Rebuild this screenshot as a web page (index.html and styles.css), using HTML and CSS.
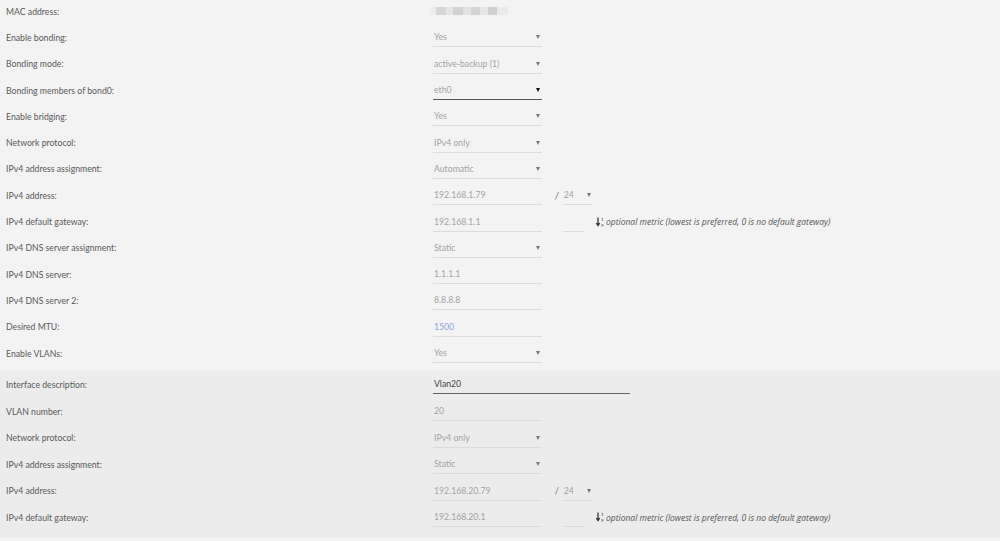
FILE: index.html
```html
<!DOCTYPE html>
<html lang="en">
<head>
    <meta charset="UTF-8">
    <title>Interface</title>
    <link rel="stylesheet" href="styles.css">
</head>
<body>
    <section class="group">
        <div class="row"><span class="label">MAC address:</span><span class="mac"></span></div>
        <div class="row"><span class="label">Enable bonding:</span><div class="field select">Yes<i></i></div></div>
        <div class="row"><span class="label">Bonding mode:</span><div class="field select">active-backup (1)<i></i></div></div>
        <div class="row"><span class="label">Bonding members of bond0:</span><div class="field select focus">eth0<i></i></div></div>
        <div class="row"><span class="label">Enable bridging:</span><div class="field select">Yes<i></i></div></div>
        <div class="row"><span class="label">Network protocol:</span><div class="field select">IPv4 only<i></i></div></div>
        <div class="row"><span class="label">IPv4 address assignment:</span><div class="field select">Automatic<i></i></div></div>
        <div class="row"><span class="label">IPv4 address:</span><div class="field">192.168.1.79</div><span class="slash">/</span><div class="field select prefix">24<i></i></div></div>
        <div class="row"><span class="label">IPv4 default gateway:</span><div class="field">192.168.1.1</div><div class="field metric"></div>
            <span class="hint">
                <svg class="sort" width="9" height="10" viewBox="0 0 9 10"><path d="M2 0.5v7.5M0.3 6l1.7 2.6 1.7-2.6" fill="none" stroke="#333" stroke-width="1.3"/><text x="5" y="4" font-size="4.5" fill="#333">1</text><text x="5" y="9.5" font-size="4.5" fill="#333">9</text></svg>
                <em>optional metric (lowest is preferred, 0 is no default gateway)</em>
            </span>
        </div>
        <div class="row"><span class="label">IPv4 DNS server assignment:</span><div class="field select">Static<i></i></div></div>
        <div class="row"><span class="label">IPv4 DNS server:</span><div class="field">1.1.1.1</div></div>
        <div class="row"><span class="label">IPv4 DNS server 2:</span><div class="field">8.8.8.8</div></div>
        <div class="row"><span class="label">Desired MTU:</span><div class="field mtu">1500</div></div>
        <div class="row"><span class="label">Enable VLANs:</span><div class="field select">Yes<i></i></div></div>
    </section>
    <section class="group vlan">
        <div class="row"><span class="label">Interface description:</span><div class="field wide">Vlan20</div></div>
        <div class="row"><span class="label">VLAN number:</span><div class="field">20</div></div>
        <div class="row"><span class="label">Network protocol:</span><div class="field select">IPv4 only<i></i></div></div>
        <div class="row"><span class="label">IPv4 address assignment:</span><div class="field select">Static<i></i></div></div>
        <div class="row"><span class="label">IPv4 address:</span><div class="field">192.168.20.79</div><span class="slash">/</span><div class="field select prefix">24<i></i></div></div>
        <div class="row"><span class="label">IPv4 default gateway:</span><div class="field">192.168.20.1</div><div class="field metric"></div>
            <span class="hint">
                <svg class="sort" width="9" height="10" viewBox="0 0 9 10"><path d="M2 0.5v7.5M0.3 6l1.7 2.6 1.7-2.6" fill="none" stroke="#333" stroke-width="1.3"/><text x="5" y="4" font-size="4.5" fill="#333">1</text><text x="5" y="9.5" font-size="4.5" fill="#333">9</text></svg>
                <em>optional metric (lowest is preferred, 0 is no default gateway)</em>
            </span>
        </div>
    </section>
</body>
</html>
```

FILE: styles.css
```css
body {
    margin: 0;
    background-color: #f3f3f3;
    font-family: Lato, "Open Sans", Arial, sans-serif;
    font-size: 8.7px;
    color: #595959;
}

.group {
    margin-top: -2px;
}

.row {
    display: flex;
    align-items: center;
    height: 26.3px;
    padding-left: 6px;
}

.label {
    width: 427px;
    flex-shrink: 0;
}

.vlan {
    margin-top: 5px;
    padding-bottom: 7px;
    background-color: #ececec;
}

.vlan .row {
    height: 26.6px;
}

.field {
    box-sizing: border-box;
    width: 109px;
    height: 20px;
    padding: 0 1px;
    display: flex;
    align-items: center;
    position: relative;
    color: #a3a3a3;
    border-bottom: 1px solid #dcdcdc;
}

.select i {
    position: absolute;
    right: 2px;
    top: 8px;
    width: 0;
    height: 0;
    border-left: 2.5px solid transparent;
    border-right: 2.5px solid transparent;
    border-top: 4px solid #777;
}

.focus {
    border-bottom-color: #555;
}

.focus i {
    border-top-color: #111;
}

.mtu {
    color: #8fa6dc;
}

.wide {
    width: 197px;
    color: #444;
    border-bottom-color: #666;
}

.slash {
    margin: 0 4px 0 13px;
    font-style: italic;
    color: #666;
}

.prefix {
    width: 30px;
}

.metric {
    width: 21px;
    margin-left: 21px;
}

.hint {
    display: flex;
    align-items: center;
    margin-left: 12px;
    color: #555;
}

.hint em {
    font-family: "Open Sans", Arial, sans-serif;
    font-size: 8.5px;
}

.sort {
    margin-right: 1px;
}

.mac {
    width: 78px;
    height: 8px;
    margin-left: -3px;
    background: linear-gradient(90deg, #ececec 0 8%, #d6d6d6 8% 20%, #e4e4e4 20% 30%, #d2d2d2 30% 42%, #e2e2e2 42% 52%, #d4d4d4 52% 64%, #e6e6e6 64% 74%, #d0d0d0 74% 86%, #eaeaea 86% 100%);
}
```
